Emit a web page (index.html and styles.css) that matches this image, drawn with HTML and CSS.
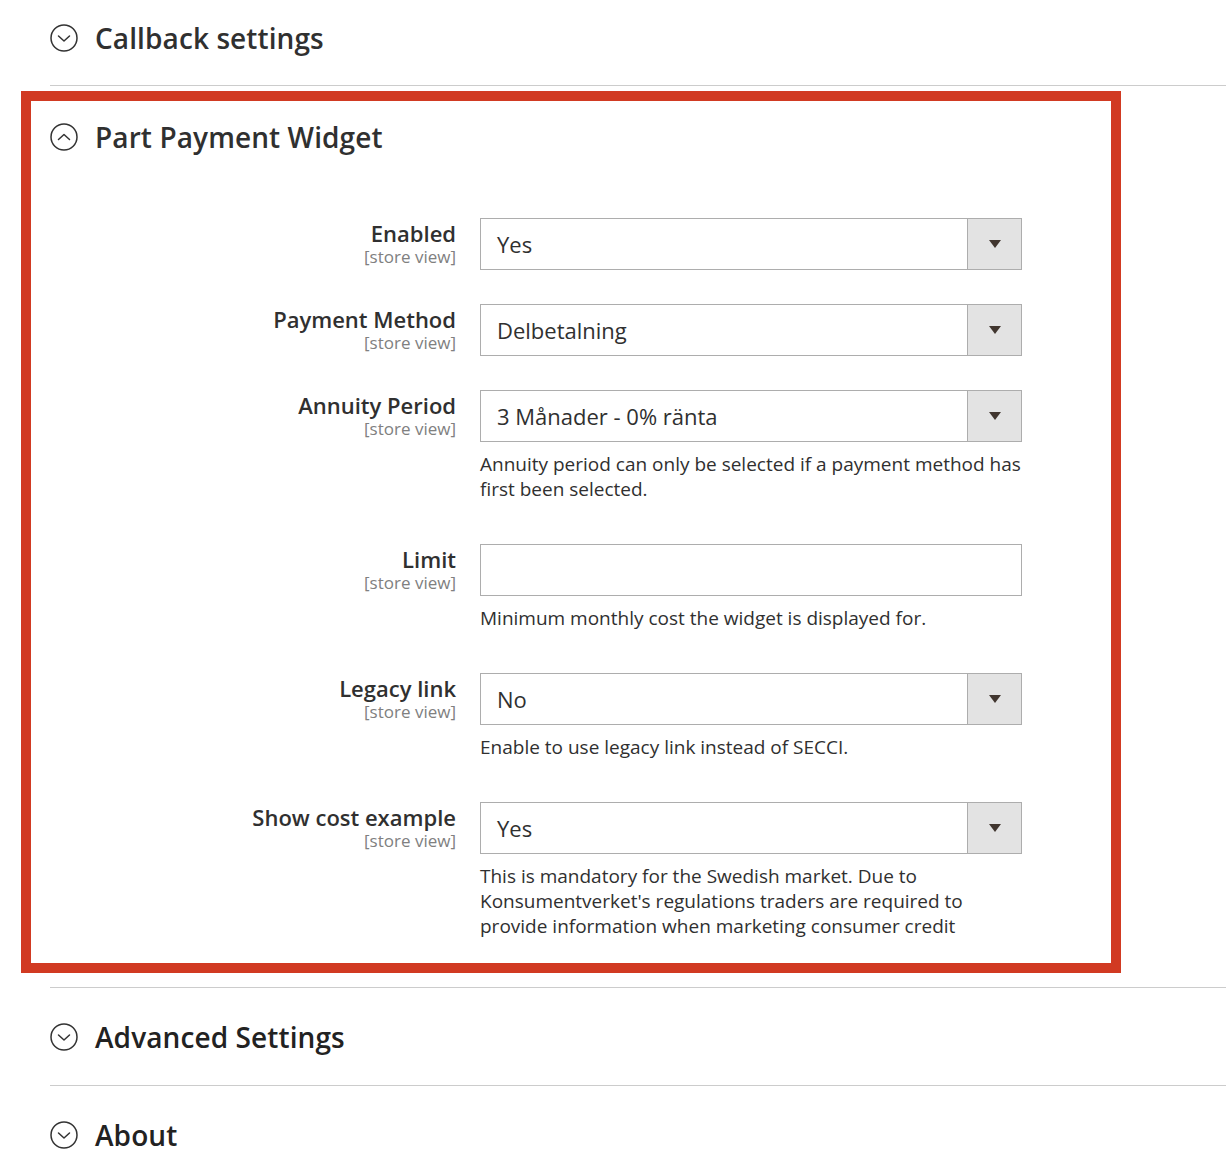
FILE: index.html
```html
<!DOCTYPE html>
<html lang="en">
<head>
<meta charset="utf-8">
<title>Part Payment Widget</title>
<link rel="stylesheet" href="styles.css">
</head>
<body>
<div class="page">
  <section class="block block-first">
    <h2 class="block-title">
      <svg class="toggle" width="28" height="28" viewBox="0 0 28 28"><circle cx="14" cy="14" r="13" fill="none" stroke="currentColor" stroke-width="1.5"/><polyline points="8.5,12 14,17 19.5,12" fill="none" stroke="currentColor" stroke-width="1.5" stroke-linecap="round" stroke-linejoin="round"/></svg>
      <span>Callback settings</span>
    </h2>
  </section>

  <section class="highlight">
    <h2 class="block-title">
      <svg class="toggle" width="28" height="28" viewBox="0 0 28 28"><circle cx="14" cy="14" r="13" fill="none" stroke="currentColor" stroke-width="1.5"/><polyline points="8.5,16.5 14,11.5 19.5,16.5" fill="none" stroke="currentColor" stroke-width="1.5" stroke-linecap="round" stroke-linejoin="round"/></svg>
      <span>Part Payment Widget</span>
    </h2>

    <div class="fields">
      <div class="field">
        <div class="label"><span class="label-text">Enabled</span><span class="scope">[store view]</span></div>
        <div class="control">
          <div class="select"><span class="select-value">Yes</span><span class="select-btn"><span class="arrow"></span></span></div>
        </div>
      </div>

      <div class="field">
        <div class="label"><span class="label-text">Payment Method</span><span class="scope">[store view]</span></div>
        <div class="control">
          <div class="select"><span class="select-value">Delbetalning</span><span class="select-btn"><span class="arrow"></span></span></div>
        </div>
      </div>

      <div class="field">
        <div class="label"><span class="label-text">Annuity Period</span><span class="scope">[store view]</span></div>
        <div class="control">
          <div class="select"><span class="select-value">3 Månader - 0% ränta</span><span class="select-btn"><span class="arrow"></span></span></div>
          <p class="note">Annuity period can only be selected if a payment method has first been selected.</p>
        </div>
      </div>

      <div class="field">
        <div class="label"><span class="label-text">Limit</span><span class="scope">[store view]</span></div>
        <div class="control">
          <div class="input"></div>
          <p class="note">Minimum monthly cost the widget is displayed for.</p>
        </div>
      </div>

      <div class="field">
        <div class="label"><span class="label-text">Legacy link</span><span class="scope">[store view]</span></div>
        <div class="control">
          <div class="select"><span class="select-value">No</span><span class="select-btn"><span class="arrow"></span></span></div>
          <p class="note">Enable to use legacy link instead of SECCI.</p>
        </div>
      </div>

      <div class="field">
        <div class="label"><span class="label-text">Show cost example</span><span class="scope">[store view]</span></div>
        <div class="control">
          <div class="select"><span class="select-value">Yes</span><span class="select-btn"><span class="arrow"></span></span></div>
          <p class="note">This is mandatory for the Swedish market. Due to Konsumentverket's regulations traders are required to provide information when marketing consumer credit</p>
        </div>
      </div>
    </div>
  </section>

  <section class="block block-sep block-after">
    <h2 class="block-title dark">
      <svg class="toggle" width="28" height="28" viewBox="0 0 28 28"><circle cx="14" cy="14" r="13" fill="none" stroke="currentColor" stroke-width="1.5"/><polyline points="8.5,12 14,17 19.5,12" fill="none" stroke="currentColor" stroke-width="1.5" stroke-linecap="round" stroke-linejoin="round"/></svg>
      <span>Advanced Settings</span>
    </h2>
  </section>

  <section class="block block-sep block-last">
    <h2 class="block-title dark">
      <svg class="toggle" width="28" height="28" viewBox="0 0 28 28"><circle cx="14" cy="14" r="13" fill="none" stroke="currentColor" stroke-width="1.5"/><polyline points="8.5,12 14,17 19.5,12" fill="none" stroke="currentColor" stroke-width="1.5" stroke-linecap="round" stroke-linejoin="round"/></svg>
      <span>About</span>
    </h2>
  </section>
</div>
</body>
</html>
```

FILE: styles.css
```css
html, body {
  margin: 0;
  padding: 0;
  background: #ffffff;
}

body {
  font-family: "Open Sans", "Noto Sans", sans-serif;
  color: #303030;
}

.page {
  width: 1226px;
}

.block {
  margin-left: 50px;
}

.block-first {
  padding-top: 24px;
  padding-bottom: 33px;
  border-bottom: 1px solid #cccccc;
}

.block-sep {
  border-top: 1px solid #cccccc;
  padding-top: 35px;
  padding-bottom: 34px;
}

.block-last {
  padding-bottom: 4px;
}

.block-after {
  margin-top: 14px;
}

.block-title {
  display: flex;
  align-items: center;
  gap: 17px;
  height: 28px;
  margin: 0;
  font-size: 28px;
  font-weight: 600;
  line-height: 28px;
  color: #303030;
  letter-spacing: 0.1px;
}

.block-title.dark {
  color: #222222;
}

.toggle {
  flex: none;
  display: block;
  color: #333333;
}

.highlight {
  box-sizing: border-box;
  width: 1100px;
  margin: 5px 0 0 21px;
  border: 10px solid #d13a22;
  padding: 22px 0 16px 0;
}

.highlight .block-title {
  margin-left: 19px;
}

.fields {
  margin-top: 67px;
}

.field {
  display: grid;
  grid-template-columns: 425px 542px;
  column-gap: 24px;
  margin-bottom: 34px;
}

.field:last-child {
  margin-bottom: 0;
}

.label {
  display: flex;
  flex-direction: column;
  align-items: flex-end;
  text-align: right;
  padding-top: 2px;
}

.label-text {
  font-size: 22px;
  font-weight: 600;
  line-height: 26px;
  color: #303030;
}

.scope {
  margin-top: 1px;
  font-size: 17px;
  line-height: 20px;
  color: #808080;
}

.select,
.input {
  box-sizing: border-box;
  height: 52px;
  border: 1px solid #adadad;
  background: #ffffff;
  display: flex;
}

.select-value {
  flex: 1;
  padding-left: 16px;
  font-size: 22px;
  line-height: 50px;
  color: #303030;
  white-space: nowrap;
}

.select-btn {
  flex: none;
  box-sizing: border-box;
  width: 54px;
  border-left: 1px solid #adadad;
  background: #e3e3e3;
  display: flex;
  align-items: center;
  justify-content: center;
}

.arrow {
  width: 0;
  height: 0;
  border-left: 6px solid transparent;
  border-right: 6px solid transparent;
  border-top: 8px solid #41362f;
}

.note {
  margin: 10px 0 8px 0;
  font-size: 19px;
  line-height: 25px;
  color: #303030;
}
```
